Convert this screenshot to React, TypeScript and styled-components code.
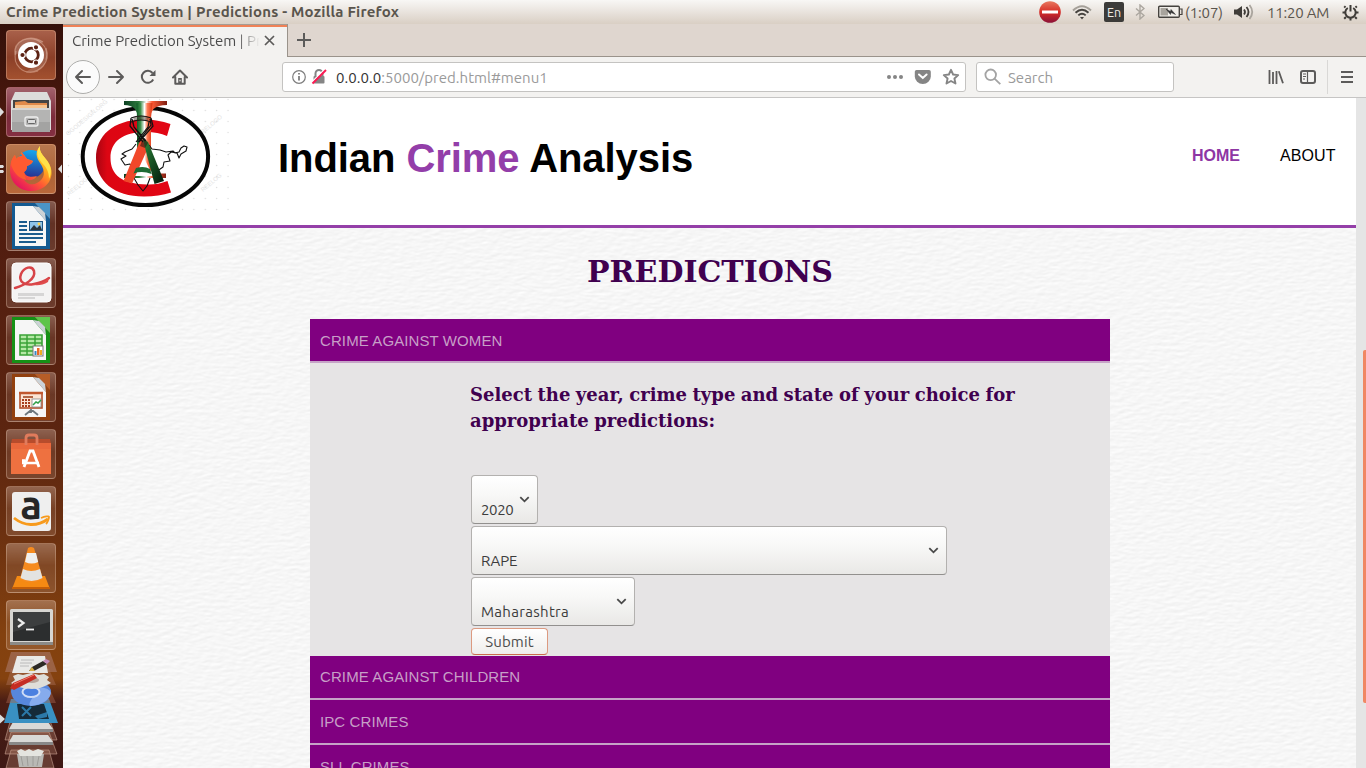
import React from 'react';
import styled, { createGlobalStyle } from 'styled-components';

const Global = createGlobalStyle`
  *, *::before, *::after { box-sizing: border-box; }
  html, body { margin: 0; padding: 0; overflow: hidden; }
  body { background: #fff; }
  svg { display: block; flex: none; }
`;

const ui = `'Ubuntu', 'Noto Sans', 'Open Sans', sans-serif`;
const sans = `Arial, 'Liberation Sans', sans-serif`;
const serif = `'DejaVu Serif', serif`;

const Desktop = styled.div`
  width: 1366px;
  height: 768px;
  display: flex;
  flex-direction: column;
  overflow: hidden;
`;

const SystemBar = styled.header`
  height: 24px;
  flex: none;
  display: flex;
  align-items: center;
  justify-content: space-between;
  padding: 0 7px 0 6px;
  background: linear-gradient(#f8f7f5, #ece7e2 40%, #d9cfc4);
  font-family: ${ui};
  color: #5a554d;
`;

const WindowTitle = styled.div`
  font-size: 15px;
  font-weight: 700;
  letter-spacing: 0.205px;
  line-height: 24px;
  white-space: nowrap;
`;

const Indicators = styled.div`
  display: flex;
  align-items: center;
  height: 24px;
`;

const Indicator = styled.div<{ $w: number; $track?: number }>`
  width: ${p => p.$w}px;
  height: 24px;
  display: flex;
  align-items: center;
  font-size: 15px;
  letter-spacing: ${p => p.$track ?? 0}px;
  white-space: nowrap;
`;

const Language = styled.div`
  width: 20px;
  height: 20px;
  border-radius: 2px;
  background: #3c3b39;
  color: #efebe6;
  font-size: 12.5px;
  line-height: 20px;
  text-align: center;
`;

const Workspace = styled.div`
  flex: 1;
  display: flex;
  min-height: 0;
`;

const Launcher = styled.nav`
  width: 63px;
  flex: none;
  display: flex;
  flex-direction: column;
  align-items: center;
  padding: 6px 1px 0 0;
  gap: 7px;
  background: linear-gradient(#34100a, #4a180d 12%, #541f10 35%, #5c2510 55%, #6b3010 68%, #83410f 82%, #85420f 88%, #4a1d14 91%, #3e1915);
`;

const Slot = styled.div`
  position: relative;
  width: 62px;
  height: 50px;
  flex: none;
  display: flex;
  justify-content: center;
`;

const Tile = styled.div<{ $bg: string }>`
  width: 50px;
  height: 50px;
  border-radius: 4px;
  border: 1px solid rgba(255, 225, 205, 0.28);
  background: ${p => p.$bg};
  display: flex;
  align-items: center;
  justify-content: center;
`;

const Marks = styled.svg`
  position: absolute;
  left: 0;
  top: 0;
`;

const Browser = styled.main`
  flex: 1;
  min-width: 0;
  display: flex;
  flex-direction: column;
  background: #f3f2f0;
`;

const TabStrip = styled.div`
  height: 33px;
  flex: none;
  display: flex;
  background: #dfd6cf;
`;

const Tab = styled.div`
  width: 225px;
  display: flex;
  align-items: center;
  padding: 0 11px 0 9px;
  border-right: 1px solid #9a938b;
  background: linear-gradient(#a59b92 0 1px, #f08156 1px 3px, #f3f2f0 3px);
`;

const TabTitle = styled.div`
  width: 187px;
  overflow: hidden;
  white-space: nowrap;
  font: 15px/20px ${ui};
  letter-spacing: -0.01px;
  color: #4b4b4b;
  -webkit-mask-image: linear-gradient(90deg, #000 164px, transparent 188px);
  mask-image: linear-gradient(90deg, #000 164px, transparent 188px);
`;

const TabClose = styled.div`
  margin-left: 5px;
`;

const StripRest = styled.div`
  flex: 1;
  display: flex;
  align-items: center;
  padding-left: 9px;
  border-bottom: 1px solid #9a938b;
`;

const Toolbar = styled.div`
  height: 41px;
  flex: none;
  display: flex;
  align-items: center;
  border-bottom: 1px solid #c6c5c4;
  padding-left: 3px;
`;

const ToolGroup = styled.div`
  margin-left: auto;
  padding-right: 11px;
  display: flex;
  gap: 16px;
`;

const BackButton = styled.div`
  width: 34px;
  height: 34px;
  border-radius: 50%;
  border: 1px solid #adadab;
  background: #fbfbfb;
  display: flex;
  align-items: center;
  justify-content: center;
`;

const ToolButton = styled.div<{ $w: number }>`
  width: ${p => p.$w}px;
  display: flex;
  justify-content: center;
`;

const Field = styled.div<{ $w: number; $ml: number }>`
  width: ${p => p.$w}px;
  height: 30px;
  margin-left: ${p => p.$ml}px;
  border: 1px solid #c4c3c1;
  border-radius: 3px;
  background: #fff;
  display: flex;
  align-items: center;
  font: 15px/20px ${ui};
  color: #9a9a9a;
`;

const Address = styled.div`
  flex: 1;
  margin-left: 7px;
  padding-top: 1px;
  letter-spacing: 0.01px;
  b { font-weight: 400; color: #333; letter-spacing: 0.05px; }
`;

const Query = styled.div`
  margin-left: 7px;
  padding-top: 1px;
`;

const Separator = styled.div`
  width: 1px;
  height: 34px;
  background: #d9d8d6;
`;

const Viewport = styled.div`
  flex: 1;
  min-height: 0;
  display: flex;
`;

const Page = styled.div`
  width: 1293px;
  display: flex;
  flex-direction: column;
  overflow: hidden;
`;

const ScrollTrack = styled.div`
  width: 10px;
  background: #e5e5e5;
  padding: 252px 0 0 7px;
`;

const ScrollThumb = styled.div`
  width: 3px;
  height: 353px;
  border-radius: 2px 0 0 2px;
  background: #f08763;
`;

const SiteHeader = styled.div`
  height: 130px;
  flex: none;
  display: flex;
  background: #fff;
  border-bottom: 3px solid #943fa8;
`;

const Brand = styled.h1`
  margin: 36px 0 0 49px;
  font: 700 40px/48px ${sans};
  letter-spacing: -0.06px;
  color: #000;
  white-space: nowrap;
  span { color: #933ea9; }
`;

const Menu = styled.div`
  margin-left: auto;
  padding: 48px 20px 0 0;
  display: flex;
  gap: 40px;
  font: 16px/20px ${sans};
  color: #000;
`;

const MenuItem = styled.a<{ $active?: boolean }>`
  width: ${p => (p.$active ? 48 : 56)}px;
  color: ${p => (p.$active ? '#8e36a4' : '#000')};
  font-weight: ${p => (p.$active ? 700 : 400)};
  letter-spacing: ${p => (p.$active ? 0 : 0.1)}px;
`;

const Content = styled.section`
  position: relative;
  flex: 1;
  min-height: 0;
  background: #f5f5f5;
  overflow: hidden;
`;

const Texture = styled.svg`
  position: absolute;
  inset: 0;
`;

const Column = styled.div`
  position: relative;
  width: 800px;
  margin-left: 247px;
  display: flex;
  flex-direction: column;
`;

const Heading = styled.h2`
  margin: 26px 0 29px;
  font: 700 30px/36px ${serif};
  color: #40004f;
  text-align: center;
`;

const Section = styled.div<{ $h: number; $line: number }>`
  height: ${p => p.$h}px;
  flex: none;
  background: #800080;
  border-bottom: 2px solid #c6a3c7;
  padding-left: 10px;
  font: 15px/${p => p.$line}px ${sans};
  letter-spacing: 0.1px;
  color: #c79fc7;
`;

const Panel = styled.div`
  height: 293px;
  flex: none;
  padding: 19px 80px 0 160px;
  background: #e6e4e5;
`;

const Prompt = styled.h4`
  margin: 0 0 41px;
  font: 700 18px/26px ${serif};
  word-spacing: -0.8px;
  color: #40004f;
`;

const Form = styled.div`
  display: flex;
  flex-direction: column;
  align-items: flex-start;
  gap: 2px;
  padding-left: 1px;
`;

const Select = styled.div<{ $w: number; $track?: number }>`
  width: ${p => p.$w}px;
  height: 49px;
  display: flex;
  align-items: center;
  justify-content: space-between;
  padding: 0 7px 0 9px;
  border: 1px solid #b3b1af;
  border-bottom-color: #92908e;
  border-radius: 4px;
  background: linear-gradient(#fff, #f8f8f7 40%, #e9e8e6);
  font: 15px/20px ${ui};
  letter-spacing: ${p => p.$track ?? 0}px;
  color: #3c3c3c;
  span { padding-top: 21px; }
`;

const Submit = styled.div`
  width: 77px;
  height: 27px;
  border: 1px solid #dc9a80;
  border-bottom-color: #cb6c4c;
  border-radius: 4px;
  background: linear-gradient(#fff, #efeeec);
  font: 15px/26px ${ui};
  letter-spacing: 0.15px;
  text-align: center;
  color: #4c4c4c;
`;

const Chevron = () => (
  <svg width="11" height="8" viewBox="0 0 11 8" fill="none" stroke="#4a4a4a" strokeWidth="1.8">
    <path d="M1.300 1.100 5.500 5.300 9.700 1.100" />
  </svg>
);

const glass = 'linear-gradient(rgba(255,235,225,.30), rgba(255,235,225,.10) 45%, rgba(255,235,225,.14))';

const Ubuntu = () => (
  <svg width="48" height="48" viewBox="0 0 48 48">
    <g fill="none" stroke="#e9b9a4" strokeOpacity=".5" strokeWidth="1.200">
      <path d="M8 24C6 10 22 2 36 11M16 9c14-5 27 6 23 20M39 17c5 14-6 26-20 24M31 40C16 45 5 34 9 20" />
    </g>
    <path d="M8 24C6 10 22 2 36 11l-8 4zM39 17c5 14-6 26-20 24l10-7z" fill="#fff" opacity=".15" />
    <circle cx="24" cy="24" r="13" fill="#fff" />
    <circle cx="24.500" cy="24" r="6.800" fill="none" stroke="#5b2113" strokeWidth="2.800" />
    <g stroke="#fff" strokeWidth="1.200" fill="#5b2113">
      <circle cx="15.500" cy="24" r="2.700" /><circle cx="29" cy="16.300" r="2.700" /><circle cx="29" cy="31.700" r="2.700" />
    </g>
  </svg>
);

const Files = () => (
  <svg width="48" height="48" viewBox="0 0 48 48">
    <path d="M8 4h32l4 9v29H4V13z" fill="#dcdcdb" />
    <path d="M6 12h36v9H6z" fill="#444" />
    <path d="M8 14l10-1 3 2h19v7H8z" fill="#e08a4a" /><path d="M8 17h32v5H8z" fill="#f6c591" />
    <path d="M5 20h38v24H5z" fill="#b4b4b3" /><path d="M5 20h38v2H5z" fill="#d5d5d4" />
    <path d="M5 34h38v10H5z" fill="#8f8f8e" opacity=".45" />
    <rect x="18" y="29" width="13" height="9" rx="2" fill="#b9b9b8" stroke="#eee" strokeWidth="1.300" />
    <rect x="20.500" y="31.500" width="8" height="4" rx="1" fill="#ddd" stroke="#666" />
  </svg>
);

const Firefox = () => (
  <svg width="48" height="48" viewBox="0 0 48 48">
    <defs>
      <linearGradient id="fx" x1=".85" y1=".05" x2=".2" y2=".9">
        <stop offset="0" stopColor="#ffe84a" /><stop offset=".35" stopColor="#ffae1b" />
        <stop offset=".65" stopColor="#ff5a35" /><stop offset="1" stopColor="#e5175c" />
      </linearGradient>
      <linearGradient id="fxb" x1=".5" y1="0" x2=".4" y2="1"><stop offset="0" stopColor="#12a6ef" /><stop offset="1" stopColor="#2a2c8d" /></linearGradient>
    </defs>
    <circle cx="24" cy="19" r="14" fill="url(#fxb)" />
    <path d="M33 1c-1 5 2 8 5 12 8 9 8 17 4 24-4 6-11 9-18 9C12 46 3 37 3 25c0-7 2-12 5-15l1 4c2-2 4-3 6-3l-1-4c3 2 4 5 6 7l6 2c-1 3-4 4-6 5 0 3-1 5-3 6 2 6 9 5 13 4-4 6-12 5-14 1 2 7 9 9 14 6 8-4 9-12 3-20-4-6-5-11 0-17z" fill="url(#fx)" />
    <path d="M33 1c-1 5 2 8 5 12 7 8 7 15 4 21 0-8-3-12-7-16-5-6-6-12-2-17z" fill="#ffe14a" />
    <path d="M8 10l1 4c2-2 4-3 6-3l-1-4c3 2 4 5 6 7l6 2c-1 3-4 4-6 5 0 3-1 5-3 6l2 8c-8-2-13-8-15-16 0-3 2-7 4-9z" fill="#ff5a30" />
  </svg>
);

const Paper = ({ color, fold, children }: { color: string; fold: string; children: React.ReactNode }) => (
  <svg width="48" height="48" viewBox="0 0 48 48">
    <path d="M5 1h23l15 16v30H5z" fill={color} />
    <path d="M8 4h18l13 15v25H8z" fill="#f6f6f6" />
    <path d="M28 1h15v16z" fill={fold} />
    <path d="M26 4l13 15-1-8-6-6z" fill="#ccd2d6" />
    {children}
  </svg>
);

const Writer = () => (
  <Paper color="#135a92" fold="#4b94c7">
    <path d="M12 20h8M12 24h8M12 28h8M12 32h24M12 36h24M12 40h17" stroke="#1b5c8e" strokeWidth="2" />
    <rect x="22" y="19" width="14" height="10" fill="#1e5481" /><path d="M23 20h12v8H23z" fill="#8fc3e8" /><path d="M23 28l4-5 3 3 3-3 2 5z" fill="#2b333a" /><circle cx="32" cy="22" r="1.400" fill="#ffd24a" />
  </Paper>
);

const Reader = () => (
  <svg width="48" height="48" viewBox="0 0 48 48">
    <rect x="5" y="4" width="39" height="39" rx="4" fill="#f4f3f3" stroke="#fff" />
    <path d="M11 34h26v3H11zM11 38h17v2H11z" fill="#d6d5d5" />
    <path d="M8 29c10-3 21-9 19-17-2-6-10-4-13 3-3 8 4 12 13 10 6-1 11-3 15-6" fill="none" stroke="#d74347" strokeWidth="2.500" strokeLinecap="round" />
    <path d="M22 25c8 1 14-1 20-6l-1 4c-6 4-13 4-19 2z" fill="#e04b4b" />
  </svg>
);

const Calc = () => (
  <Paper color="#169116" fold="#5ec44a">
    <path d="M13 19h22v20H13z" fill="#b4e8a5" stroke="#3aa237" strokeWidth="1.600" />
    <path d="M13 23h22M13 27h22M13 31h22M13 35h22M20 19v20M28 19v20" stroke="#3aa237" strokeWidth="1.500" />
    <rect x="26" y="30" width="10" height="10" fill="#fff" stroke="#777" />
    <path d="M27.500 39v-4h2v4z" fill="#3a87c5" /><path d="M30 39v-7h2.500v7z" fill="#e96a26" /><path d="M33 39v-5h2v5z" fill="#eeac23" />
  </Paper>
);

const Impress = () => (
  <Paper color="#92400f" fold="#b65d27">
    <path d="M24 36v4M18 42l5-4h3l5 4" stroke="#6d777d" strokeWidth="1.800" fill="none" />
    <rect x="13" y="20" width="22" height="15" fill="#fbe4d4" stroke="#b6512b" strokeWidth="1.600" />
    <path d="M12 20h24" stroke="#c1572e" strokeWidth="2.500" /><path d="M16 24h10" stroke="#9a3b16" strokeWidth="1.500" />
    <path d="M15 27h8M15 30h8M15 33h8" stroke="#a63d1c" strokeWidth="1.800" strokeDasharray="2 1" />
    <rect x="25" y="26" width="9" height="8" fill="#fff" stroke="#888" strokeWidth=".8" /><path d="M26 32l3-3 2 1 3-3" stroke="#32a04a" fill="none" strokeWidth="1.500" />
  </Paper>
);

const Software = () => (
  <svg width="48" height="48" viewBox="0 0 48 48">
    <path d="M5 9h38l1 5H4z" fill="#b74c2c" />
    <path d="M4 13h40v31H4z" fill="#ee7140" /><path d="M4 13h40v6H4z" fill="#e9683c" />
    <path d="M19 15V8q0-3 3-3h5q3 0 3 3v7" fill="none" stroke="#e07b5c" strokeWidth="2.800" />
    <path d="M17 37 23 21h3L32 37" stroke="#fff" strokeWidth="2.800" fill="none" />
    <path d="M15 30.500h3M15 33h17" stroke="#fff" strokeWidth="2.300" />
  </svg>
);

const AmazonTile = styled.div`
  width: 39px;
  height: 39px;
  border-radius: 3px;
  background: #efefef;
  display: grid;
  justify-items: center;
  > * { grid-area: 1 / 1; }
`;

const AmazonGlyph = styled.span`
  font: 700 40px/39px ${ui};
  margin-top: -7px;
  color: #262626;
`;

const Amazon = () => (
  <AmazonTile>
    <AmazonGlyph>a</AmazonGlyph>
    <svg width="39" height="39" viewBox="5 5 39 39">
      <path d="M7 31c10 8 23 9 34 1" stroke="#f79a1c" strokeWidth="2.800" fill="none" />
      <path d="M34 31c4-2 8-2 8-1s-1 5-3 7" stroke="#f79a1c" strokeWidth="1.800" fill="none" />
    </svg>
  </AmazonTile>
);

const Vlc = () => (
  <svg width="48" height="48" viewBox="0 0 48 48">
    <path d="M10 32h28l5 13H5z" fill="#f58a13" /><path d="M5 43h38v2H5z" fill="#c65f07" />
    <path d="M21 4q3-2 6 0l9 31q-12 7-23 0z" fill="#f68b1f" />
    <path d="M20 9h9l2.200 9q-6.500 3-13.200 0z" fill="#efefee" />
    <path d="M16 25q8 4 17 0l2.500 9q-11 6-22 0z" fill="#e3e3e1" />
  </svg>
);

const Terminal = () => (
  <svg width="48" height="48" viewBox="0 0 48 48">
    <rect x="3" y="8" width="43" height="35" rx="1.500" fill="#d7d6d2" /><path d="M3 41h43v3H3z" fill="#8b8a87" />
    <rect x="6" y="11" width="37" height="29" fill="#2c2e2f" /><path d="M6 11h37v10L6 31z" fill="#fff" opacity=".08" />
    <path d="M11 18l5.500 4-5.500 4" fill="none" stroke="#eee" strokeWidth="2.200" /><path d="M19 28.500h8" stroke="#eee" strokeWidth="1.800" />
  </svg>
);

const Stack = () => (
  <svg width="62" height="117" viewBox="0 0 62 117">
    <g fill="#cf9a82" fillOpacity=".28" stroke="#dcb5a3" strokeOpacity=".5">
      <path d="M11 98h38l5 18H6z" /><path d="M11 80h38l8 22H5z" /><path d="M11 66h38l8 22H5z" />
    </g>
    <path d="M17 102h27l-2 13H19z" fill="#b9b9b5" /><path d="M17 99l4-2 4 2 4-2 4 2 5-2 6 2-3 5H20z" fill="#e4e4df" />
    <path d="M21 104l2 10M27 104l1 10M33 104v10M39 104l-2 10" stroke="#9d9c98" />
    <path d="M13 83h35l5 7H9z" fill="#d9d9d7" /><path d="M9 90h44v3H9z" fill="#888" />
    <path d="M13 70h35l5 7H9z" fill="#d9d9d7" /><path d="M9 77h44v3H9z" fill="#888" />
    <path d="M11 47h38l9 24H4z" fill="#3990c2" /><path d="M17 52h27l5 15H19z" fill="#152a39" />
    <path d="M22 55l9 9M31 55l-9 9" stroke="#2b78a8" strokeWidth="2" fill="none" /><path d="M35 64l12-4v5l-9 2z" fill="#2b78a8" />
    <path d="M12 33h36l8 18H6z" fill="#a86550" opacity=".45" />
    <path d="M11 40q0-10 20-10t20 10q-2 13-20 14-18-1-20-14z" fill="#5787dc" />
    <path d="M31 36q18-2 20 5-3 11-20 13-5-1 6-14z" fill="#86abed" />
    <ellipse cx="31" cy="40" rx="8.500" ry="5" fill="#4b80e0" stroke="#cfdcf6" strokeWidth="2" />
    <path d="M11 17h38l7 16H6z" fill="#a86e59" opacity=".45" />
    <path d="M13 24l5-2 5 1 8-2 8 2 5-1 5 3-2 3 4 3-6 3-5 2-8 1-9-1-7-2-5-3 4-3z" fill="#dfded9" />
    <ellipse cx="32" cy="28" rx="7" ry="3" fill="#b7a59b" />
    <path d="M10 36l3-5 21-9 3 4-23 12z" fill="#c52d23" /><path d="M14 32l20-9" stroke="#f17a68" />
    <path d="M11 0h39l7 20H5z" fill="#a77462" opacity=".65" />
    <path d="M17 4h28l3 17H12z" fill="#e9e9e7" /><path d="M21 8h13M20 11h12M20 14h9" stroke="#bababa" />
    <path d="M29 19l3-4 11-6 4 3-13 7z" fill="#2c2a26" /><path d="M29 19l3-4 3 4z" fill="#d5b14a" /><path d="M43 9l3-2 4 2-3 3z" fill="#c589b9" />
  </svg>
);

const apps: { name: string; bg: string; icon: React.ReactNode }[] = [
  { name: 'dash', bg: 'linear-gradient(#a8604a, #8b3f28 55%, #a3512f)', icon: <Ubuntu /> },
  { name: 'files', bg: 'linear-gradient(#a2616b, #7b2b3b 60%, #842f42)', icon: <Files /> },
  { name: 'firefox', bg: 'linear-gradient(#b8774f, #ad6438 60%, #b9683a)', icon: <Firefox /> },
  { name: 'writer', bg: glass, icon: <Writer /> },
  { name: 'reader', bg: glass, icon: <Reader /> },
  { name: 'calc', bg: glass, icon: <Calc /> },
  { name: 'impress', bg: glass, icon: <Impress /> },
  { name: 'software', bg: glass, icon: <Software /> },
  { name: 'amazon', bg: glass, icon: <Amazon /> },
  { name: 'vlc', bg: glass, icon: <Vlc /> },
  { name: 'terminal', bg: glass, icon: <Terminal /> },
];

const StackSlot = styled.div`
  position: relative;
  width: 62px;
  margin-top: -5px;
  flex: none;
`;

const LogoMark = styled.text`
  font: 6px ${sans};
  fill: #e3e3e3;
`;

const Logo = () => (
  <svg width="166" height="127" viewBox="0 0 166 127">
    <defs>
      <pattern id="dots" x="4" y="0" width="11.400" height="11" patternUnits="userSpaceOnUse"><circle cx="1.500" cy="1.500" r=".7" fill="#dcdcdc" /></pattern>
      <linearGradient id="stem"><stop offset="0" stopColor="#0c5a26" /><stop offset=".25" stopColor="#3f8f4a" /><stop offset=".5" stopColor="#fff" /><stop offset=".68" stopColor="#ff7b52" /><stop offset="1" stopColor="#d83312" /></linearGradient>
      <linearGradient id="serifs"><stop offset="0" stopColor="#0b3f22" /><stop offset=".35" stopColor="#2c7a3c" /><stop offset=".52" stopColor="#fff" /><stop offset=".65" stopColor="#ff5c36" /><stop offset="1" stopColor="#7c1d12" /></linearGradient>
      <linearGradient id="cee"><stop offset="0" stopColor="#a90512" /><stop offset=".15" stopColor="#dd0613" /><stop offset="1" stopColor="#e20614" /></linearGradient>
      <linearGradient id="legs" x1="0" y1="0" x2="1" y2="1"><stop offset="0" stopColor="#2d8a3a" /><stop offset="1" stopColor="#02150a" /></linearGradient>
    </defs>
    <rect width="166" height="114" fill="url(#dots)" />
    <LogoMark transform="translate(5 38) rotate(-40)">OGODESIGN.ORG</LogoMark>
    <LogoMark transform="translate(84 33) rotate(-40)">SIGN.ORG</LogoMark>
    <LogoMark transform="translate(140 36) rotate(-40)">RELOGO</LogoMark>
    <LogoMark transform="translate(6 98) rotate(-40)">REELOGODESI</LogoMark>
    <LogoMark transform="translate(140 94) rotate(-40)">REELOG</LogoMark>
    <ellipse cx="82.400" cy="58.500" rx="62.700" ry="48.500" fill="#fff" stroke="#060606" strokeWidth="4" />
    <path d="M107.500 26Q93 21 80 21.500C50 22 33 38 33 60c0 23 18 38.500 48 38.500q15 0 27-4L104.500 83Q94 87 84 86.500C59 86 47.500 77 47.500 60 47.500 44 59 34 83 34q12 0 21 4z" fill="url(#cee)" />
    <path d="M61 3h43v4q-9 0-13.500 4L87 17v58l4 .5h12V80H61v-4l12-.5 2-.5V17l-3-6Q68 7 61 7z" fill="url(#serifs)" />
    <path d="M73.500 5h16L88 20v56H74V20z" fill="url(#stem)" />
    <path d="M70 78 79 56 90 78z" fill="#fff" />
    <g fill="none" stroke="#111" strokeWidth="1.100" strokeLinejoin="round">
      <path d="M73 46l-4 5-7 3-3 2 4 2-5 3 4 6 5-1 3 5M86 47l3 4 8 1 6 2 7-1 2 2 4-1 2-4 3-2 3 1-1 4-5 3-2 4-2-5-6-1-3 3 2 6-6 1-1 5-7 5" />
      <path d="M71 80l4 7 5 6 4-5 3-8" />
    </g>
    <path d="M78.500 39 60.500 83l8.500 2.500L84 52z" fill="#f1482a" />
    <path d="M79.500 40 91.500 86l9.500-3L85 44z" fill="url(#legs)" />
    <path d="M80 40l-3 8 5 2 3-5z" fill="#2a1a12" opacity=".6" />
    <path d="M73 70q8-2.500 14 1l1.500 5q-9-3.500-18-.5z" fill="#1d6b34" />
    <g fill="none" stroke="#111" strokeWidth="1.200">
      <path d="M68 20q10-4 20 0M68 24q10-4 20 0M68 20l-1 8 13 16M88 20l2 8-14 16M70 24l1 5 11 14M86 24l-1 5L73 44M69 21l2 8 12 14M87 21l1 6-13 17" />
    </g>
    <path d="M70 19q8-3 16 0l-1 4q-7-2-14 0z" fill="#3b2f28" opacity=".45" />
  </svg>
);

const Arrow = ({ flip }: { flip?: boolean }) => (
  <svg width="18" height="16" viewBox="0 0 18 16" fill="none" stroke="#5c5b5a" strokeWidth="2" strokeLinecap="round" strokeLinejoin="round">
    <path d={flip ? 'M16 8H2M8 2 2 8l6 6' : 'M2 8h14M10 2l6 6-6 6'} />
  </svg>
);

export default function App() {
  return (
    <Desktop>
      <Global />
      <SystemBar>
        <WindowTitle>Crime Prediction System | Predictions - Mozilla Firefox</WindowTitle>
        <Indicators>
          <Indicator $w={33}>
            <svg width="22" height="22" viewBox="0 0 22 22">
              <defs><linearGradient id="stop" x2="0" y2="1"><stop offset="0" stopColor="#e8785f" /><stop offset=".5" stopColor="#d72d26" /><stop offset="1" stopColor="#8a1238" /></linearGradient></defs>
              <circle cx="11" cy="11" r="10.800" fill="url(#stop)" /><path d="M3 9.500h16v3H3z" fill="#fff" />
            </svg>
          </Indicator>
          <Indicator $w={32}>
            <svg width="20" height="16" viewBox="0 0 20 16" fill="none" strokeWidth="1.900">
              <path d="M1 6.500Q10-2 19 6.500" stroke="#a5a099" /><path d="M3.500 8.800Q10 2.500 16.500 8.800M6.300 11.400Q10 8 13.700 11.400" stroke="#45423e" /><path d="M8 13h4l-2 2.500z" fill="#45423e" />
            </svg>
          </Indicator>
          <Indicator $w={31}><Language>En</Language></Indicator>
          <Indicator $w={23}>
            <svg width="10" height="16" viewBox="0 0 10 16" fill="none" stroke="#aba69f" strokeWidth="1.400"><path d="M1 4.500l8 7L5 15V1l4 3.500-8 7" /></svg>
          </Indicator>
          <Indicator $w={27}>
            <svg width="25" height="14" viewBox="0 0 25 14">
              <rect x=".7" y="1.200" width="20.600" height="11.100" rx="1" fill="#f1eee9" stroke="#45423e" strokeWidth="1.400" /><path d="M2.500 3H10v7.500H2.500z" fill="#a8a49d" /><path d="M22 4h2v5.500h-2" fill="none" stroke="#45423e" strokeWidth="1.200" /><path d="M8 4l4.500 2.500.5-2 4.500 5-4.500-2-.5 2z" fill="#333" stroke="#333" strokeWidth=".5" />
            </svg>
          </Indicator>
          <Indicator $w={49} $track={-0.1}>(1:07)</Indicator>
          <Indicator $w={33}>
            <svg width="20" height="16" viewBox="0 0 20 16" fill="none" strokeWidth="1.800"><path d="M0 5.500h3L8 2v12L3 10.500H0z" fill="#3f3c38" /><path d="M10 5.500q2 2.500 0 5M12.500 3q4 5 0 10" stroke="#3f3c38" /><path d="M15.500 1q5.500 7 0 14" stroke="#aaa59e" /></svg>
          </Indicator>
          <Indicator $w={75} $track={-0.2}>11:20 AM</Indicator>
          <Indicator $w={17}>
            <svg width="17" height="17" viewBox="0 0 17 17" fill="none" stroke="#3f3c38">
              <path d="M5.800 4A5.200 5.200 0 1 0 11.200 4" strokeWidth="2" /><path d="M8.500 1v6.500" strokeWidth="2" />
              <path d="M3.500 3.500 2.200 2.200M13.500 3.500l1.300-1.300M3 8.500H.5M14 8.500h2.500M4 13l-1.800 1.800M13 13l1.800 1.800M8.500 14v2.500" strokeWidth="2" />
            </svg>
          </Indicator>
        </Indicators>
      </SystemBar>
      <Workspace>
        <Launcher>
          {apps.map(a => (
            <Slot key={a.name}>
              <Tile $bg={a.bg}>{a.icon}</Tile>
              {a.name === 'files' && <Marks width="62" height="50"><path d="M0 20.500l4 4.500-4 4.500z" fill="#ddd" /></Marks>}
              {a.name === 'firefox' && <Marks width="62" height="50"><path d="M0 21h3l1 1.500-1 1.500H0zM0 26h3l1 1.500-1 1.500H0zM62 20.500 58 25l4 4.500z" fill="#ddd" /></Marks>}
            </Slot>
          ))}
          <StackSlot>
            <Stack />
            <Marks width="62" height="117"><path d="M0 62.500l5 4.500-5 4.500z" fill="#ddd" /></Marks>
          </StackSlot>
        </Launcher>
        <Browser>
          <TabStrip>
            <Tab>
              <TabTitle>Crime Prediction System | Predictions</TabTitle>
              <TabClose><svg width="11" height="11" viewBox="0 0 11 11" stroke="#5c5b5a" strokeWidth="1.700"><path d="M1 1l9 9M10 1l-9 9" /></svg></TabClose>
            </Tab>
            <StripRest><svg width="14" height="14" viewBox="0 0 14 14" stroke="#5c5b5a" strokeWidth="2"><path d="M7 0v14M0 7h14" /></svg></StripRest>
          </TabStrip>
          <Toolbar>
            <BackButton><Arrow flip /></BackButton>
            <ToolButton $w={32}><Arrow /></ToolButton>
            <ToolButton $w={32}>
              <svg width="16" height="16" viewBox="0 0 16 16" fill="none" stroke="#5c5b5a" strokeWidth="2"><path d="M13.200 10.500A6 6 0 1 1 12.500 4" /><path d="M15.500 1v6H9.500z" fill="#5c5b5a" stroke="none" /></svg>
            </ToolButton>
            <ToolButton $w={32}>
              <svg width="16" height="16" viewBox="0 0 16 16" fill="none" stroke="#5c5b5a" strokeWidth="2" strokeLinejoin="round" strokeLinecap="round"><path d="M1 8.500 8 1.500l7 7M3.300 8v6.800h9.400V8" /><path d="M6.200 9h3.600v6H6.200z" fill="#5c5b5a" stroke="none" /><path d="M8 11v.8" stroke="#f3f2f0" strokeWidth="1.200" /></svg>
            </ToolButton>
            <Field $w={684} $ml={86}>
              <svg width="46" height="18" viewBox="0 0 46 18">
                <circle cx="16" cy="9" r="6.300" fill="none" stroke="#7d7d7d" strokeWidth="1.200" /><path d="M16 8v4.500M16 5v1.600" stroke="#6d6d6d" strokeWidth="1.600" />
                <path d="M32.500 8V5.500a3.500 3.500 0 0 1 7 0V8" fill="none" stroke="#858585" strokeWidth="2" /><rect x="30.500" y="8" width="11" height="7.500" rx="1" fill="#858585" />
                <path d="M29 14 41 2" stroke="#fff" strokeWidth="1.500" /><path d="M29.500 15.500 43 2" stroke="#fb1b53" strokeWidth="2" />
              </svg>
              <Address><b>0.0.0.0</b>:5000/pred.html#menu1</Address>
              <svg width="80" height="20" viewBox="0 0 80 20">
                <g fill="#858585"><circle cx="4" cy="10" r="2" /><circle cx="10" cy="10" r="2" /><circle cx="16" cy="10" r="2" /><path d="M31.500 3h12.500q1.800 0 1.800 1.800v4.700a8 7.500 0 0 1-16 0V4.800Q29.800 3 31.500 3z" /></g>
                <path d="M34 7.500l3.800 3.500 3.800-3.500" stroke="#fff" strokeWidth="2" fill="none" strokeLinecap="round" />
                <path d="M66 2.800l2.100 4.700 5.100.6-3.800 3.400 1.100 5-4.500-2.500-4.500 2.500 1.100-5-3.800-3.400 5.100-.6z" fill="none" stroke="#858585" strokeWidth="1.900" strokeLinejoin="round" />
              </svg>
            </Field>
            <Field $w={198} $ml={10}>
              <svg width="24" height="18" viewBox="0 0 24 18" fill="none" stroke="#a3a3a3" strokeWidth="1.800"><circle cx="13.700" cy="6.800" r="5.300" /><path d="M17.500 10.700l5.800 5.500" /></svg>
              <Query>Search</Query>
            </Field>
            <ToolGroup>
              <svg width="16" height="14" viewBox="0 0 16 14" stroke="#5c5b5a" strokeWidth="1.800"><path d="M1.500 0v14M5 2v12M8.500 1v13M10.800 1.300l4.200 12" /></svg>
              <svg width="16" height="14" viewBox="0 0 16 14" fill="none" stroke="#5c5b5a"><rect x="1" y="1" width="14" height="12" rx="2" strokeWidth="2" /><path d="M7.500 1v12" strokeWidth="1.200" /><path d="M3 4h3M3 6.500h3M3 9h2" /></svg>
            </ToolGroup>
            <Separator />
            <ToolButton $w={38}>
              <svg width="12" height="12" viewBox="0 0 12 12" stroke="#5c5b5a" strokeWidth="2"><path d="M0 1h12M0 6h12M0 11h12" /></svg>
            </ToolButton>
          </Toolbar>
          <Viewport>
            <Page>
              <SiteHeader>
                <Logo />
                <Brand>Indian <span>Crime</span> Analysis</Brand>
                <Menu>
                  <MenuItem $active>HOME</MenuItem>
                  <MenuItem>ABOUT</MenuItem>
                </Menu>
              </SiteHeader>
              <Content>
                <Texture width="1293" height="540">
                  <filter id="paper" x="0" y="0" width="100%" height="100%" colorInterpolationFilters="sRGB">
                    <feTurbulence type="fractalNoise" baseFrequency="0.11 0.3" numOctaves="2" seed="6" result="n" />
                    <feDiffuseLighting in="n" surfaceScale="0.12" diffuseConstant="1.115" lightingColor="#fff">
                      <feDistantLight azimuth="60" elevation="60" />
                    </feDiffuseLighting>
                  </filter>
                  <rect width="1293" height="540" filter="url(#paper)" />
                </Texture>
                <Column>
                  <Heading>PREDICTIONS</Heading>
                  <Section $h={44} $line={44}>CRIME AGAINST WOMEN</Section>
                  <Panel>
                    <Prompt>Select the year, crime type and state of your choice for appropriate predictions:</Prompt>
                    <Form>
                      <Select $w={67} $track={-0.35}><span>2020</span><Chevron /></Select>
                      <Select $w={476} $track={-0.2}><span>RAPE</span><Chevron /></Select>
                      <Select $w={164} $track={0.3}><span>Maharashtra</span><Chevron /></Select>
                      <Submit>Submit</Submit>
                    </Form>
                  </Panel>
                  <Section $h={44} $line={42}>CRIME AGAINST CHILDREN</Section>
                  <Section $h={45} $line={43}>IPC CRIMES</Section>
                  <Section $h={45} $line={43}>SLL CRIMES</Section>
                </Column>
              </Content>
            </Page>
            <ScrollTrack><ScrollThumb /></ScrollTrack>
          </Viewport>
        </Browser>
      </Workspace>
    </Desktop>
  );
}
